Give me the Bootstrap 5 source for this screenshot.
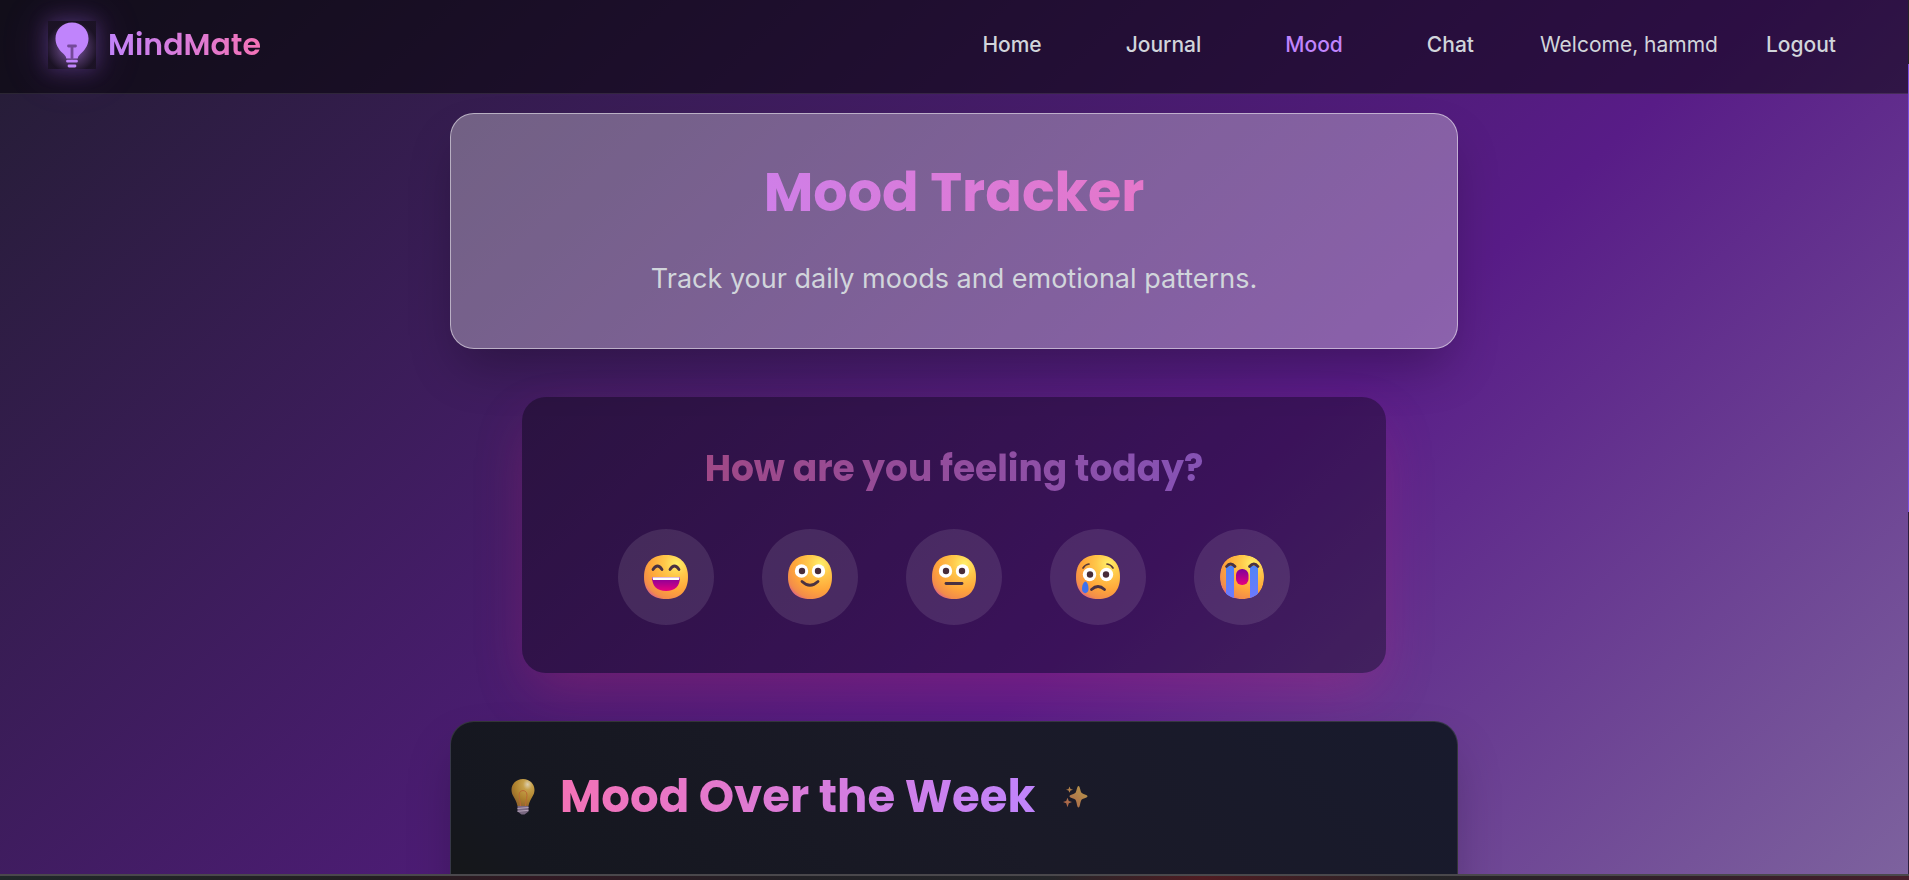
<!DOCTYPE html>
<html lang="en">
<head>
<meta charset="utf-8">
<meta name="viewport" content="width=device-width, initial-scale=1">
<title>MindMate – Mood Tracker</title>
<link rel="stylesheet" href="https://cdn.jsdelivr.net/npm/bootstrap@5.3.0/dist/css/bootstrap.min.css">
<style>
  body{font-family:"Inter","Liberation Sans",sans-serif;height:880px;overflow:hidden;color:#d1d5db;background:linear-gradient(#25232a 64px,#7a4fe0 64px,#7a4fe0 512px,#2b1f3d 512px)}
  .page{height:874px;width:1908px;background:linear-gradient(137deg,#241d34 0%,#581c87 62%,#7d629e 100%);overflow:hidden}
  .topbar{height:94px;background:rgba(0,0,0,.5);border-bottom:1px solid rgba(255,255,255,.1);padding:0 72px 4px 48px}
  .display-font{font-family:"Poppins","Inter",sans-serif}
  .brand-icon{width:48px;height:48px;background:radial-gradient(circle at 50% 55%,rgba(192,132,252,.5) 20%,rgba(110,75,140,.5) 45%,rgba(30,20,40,.75) 72%);box-shadow:0 0 20px rgba(168,105,247,.33),0 0 50px rgba(168,85,247,.2)}
  .clip-text{background-clip:text;-webkit-background-clip:text;color:transparent;white-space:nowrap}
  .brand-name{font-size:30px;font-weight:600;background-image:linear-gradient(90deg,#c084fc,#f472b6)}
  .menu{font-size:21px;font-weight:500;line-height:24px;white-space:nowrap}
  .menu .nav-link{padding:0;color:#d1d5db}
  .menu .nav-link.active{color:#c084fc}
  .nl-journal,.nl-mood,.nl-chat{margin-left:84px}
  .nl-welcome{margin-left:66px}
  .nl-logout{margin-left:48px}
  .hero{width:1008px;height:236px;margin-top:19px;border-radius:24px;background:rgba(255,255,255,.3);border:1px solid rgba(255,255,255,.5);box-shadow:0 25px 50px -10px rgba(0,0,0,.28);padding-top:46px}
  .hero h1{font-size:54px;font-weight:700;line-height:64px;margin:0 50px 35px;background-image:linear-gradient(90deg,#c084fc,#f472b6)}
  .hero p{font-size:27px;line-height:40px;margin:0}
  .feel{width:864px;height:276px;margin-top:48px;border-radius:24px;background:rgba(0,0,0,.33);padding-top:48px;box-shadow:0 22px 54px -8px rgba(219,39,119,.27)}
  .feel h2{font-size:36px;font-weight:700;line-height:48px;margin:0 0 36px;opacity:.57;background-image:linear-gradient(90deg,#f472b6,#c084fc)}
  .mood{width:96px;height:96px;border-radius:50%;border:0;padding:0;background:rgba(255,255,255,.1)}
  .week{width:1008px;height:400px;margin-top:48px;border-radius:24px;background:linear-gradient(45deg,#151719 17%,#15171f 24%,#1a1a27 60%,#181a2d 100%);border:1px solid rgba(255,255,255,.13);box-shadow:0 25px 50px -8px rgba(0,0,0,.25);padding:45px 60px}
  .week h2{font-size:45px;font-weight:700;line-height:60px;margin:0;background-image:linear-gradient(90deg,#f472b6,#c084fc)}
  .wk-bulb{margin:12px 25px 0 0}
  .wk-star{margin:19px 0 0 28px}
  .dock{height:6px;border-top:2px solid #4a484c;background:linear-gradient(90deg,#20282a 0,#231e21 20%,#321923 28%,#222126 42%,#25262a 55%,#501c22 63%,#262528 75%,#32202a 88%,#471f2c 100%)}
</style>
</head>
<body>
<svg width="0" height="0" class="position-absolute" aria-hidden="true">
  <defs>
    <radialGradient id="skin" cx=".74" cy=".2" r=".92"><stop offset="0" stop-color="#ffef69"/><stop offset=".3" stop-color="#ffc84a"/><stop offset=".65" stop-color="#ffa63a"/><stop offset=".9" stop-color="#f28b4b"/><stop offset="1" stop-color="#dd6387"/></radialGradient>
    <linearGradient id="mouth" x1="0" y1="0" x2="0" y2="1"><stop offset="0" stop-color="#7d009b"/><stop offset="1" stop-color="#e7007f"/></linearGradient>
    <linearGradient id="tear" x1="0" y1="0" x2="0" y2="1"><stop offset="0" stop-color="#4f84f6"/><stop offset="1" stop-color="#6e79ff"/></linearGradient>
    <linearGradient id="star" x1="1" y1="0" x2="0" y2="1"><stop offset="0" stop-color="#b89b4b"/><stop offset="1" stop-color="#a85c49"/></linearGradient>
    <radialGradient id="glass" cx=".7" cy=".2" r=".8"><stop offset="0" stop-color="#ddcfae"/><stop offset=".25" stop-color="#c6a04a"/><stop offset=".7" stop-color="#ae812d"/><stop offset="1" stop-color="#94682d"/></radialGradient>
    <path id="face" d="M22 0C35 0 44 7 44 22S35 44 22 44 0 37 0 22 9 0 22 0Z"/>
    <clipPath id="face-clip"><use href="#face"/></clipPath>
  </defs>
</svg>
<div class="page d-flex flex-column">
  <nav class="topbar d-flex align-items-center justify-content-between flex-shrink-0">
    <a href="#" class="d-flex align-items-center text-decoration-none">
      <span class="brand-icon d-block"><svg class="d-block" width="48" height="48" viewBox="0 0 48 48"><path fill="#c084fc" d="M24 1.500C14.600 1.500 7.500 8.600 7.500 17.500c0 6 3 10.500 6.500 14 2.500 2.300 4 3.500 4.300 6h11.400c.3-2.500 2-3.700 4.300-6 3.600-3.500 6.500-8 6.500-14C40.500 8.600 33.400 1.500 24 1.500Z"/><path d="M20.500 25h7M24 25v12" stroke="#754a9a" stroke-width="2.800" stroke-linecap="round"/><path d="M19.500 40.200h9M21 45h6" stroke="#c084fc" stroke-width="2.800" stroke-linecap="round"/></svg></span>
      <span class="brand-name display-font clip-text ms-2 ps-1">MindMate</span>
    </a>
    <div class="menu nav flex-nowrap align-items-center">
      <a class="nav-link" href="#">Home</a>
      <a class="nav-link nl-journal" href="#">Journal</a>
      <a class="nav-link active nl-mood" href="#">Mood</a>
      <a class="nav-link nl-chat" href="#">Chat</a>
      <span class="fw-normal nl-welcome">Welcome, hammd</span>
      <a class="nav-link nl-logout" href="#">Logout</a>
    </div>
  </nav>
  <main class="d-flex flex-column align-items-center flex-shrink-0">
    <section class="hero text-center flex-shrink-0">
      <h1 class="display-font clip-text">Mood Tracker</h1>
      <p>Track your daily moods and emotional patterns.</p>
    </section>
    <section class="feel d-flex flex-column align-items-center flex-shrink-0">
      <h2 class="display-font clip-text">How are you feeling today?</h2>
      <div class="d-flex gap-5">
        <button class="mood d-flex align-items-center justify-content-center" aria-label="Great"><svg width="44" height="44" viewBox="0 0 44 44"><use href="#face" fill="url(#skin)"/><path d="M9 14.500q4.500-7 9 0M26 14.500q4.500-7 9 0" fill="none" stroke="#493242" stroke-width="2.800" stroke-linecap="round"/><path d="M8 22H36C36 31 31 36 22 36S8 31 8 22Z" fill="url(#mouth)"/><path d="M8.300 22.200H35.800L35 25H9Z" fill="#fff"/></svg></button>
        <button class="mood d-flex align-items-center justify-content-center" aria-label="Good"><svg width="44" height="44" viewBox="0 0 44 44"><use href="#face" fill="url(#skin)"/><circle cx="13.500" cy="16" r="6.700" fill="#fff"/><circle cx="30.500" cy="16" r="6.700" fill="#fff"/><circle cx="14" cy="16" r="3.200" fill="#482c38"/><circle cx="30" cy="16" r="3.200" fill="#482c38"/><path d="M14 26.500q8 7.500 16 0" fill="none" stroke="#493242" stroke-width="2.800" stroke-linecap="round"/></svg></button>
        <button class="mood d-flex align-items-center justify-content-center" aria-label="Okay"><svg width="44" height="44" viewBox="0 0 44 44"><use href="#face" fill="url(#skin)"/><circle cx="13.500" cy="16" r="6.700" fill="#fff"/><circle cx="30.500" cy="16" r="6.700" fill="#fff"/><circle cx="14" cy="16" r="3.200" fill="#482c38"/><circle cx="30" cy="16" r="3.200" fill="#482c38"/><path d="M14 28.500h16" stroke="#493242" stroke-width="2.800" stroke-linecap="round"/></svg></button>
        <button class="mood d-flex align-items-center justify-content-center" aria-label="Sad"><svg width="44" height="44" viewBox="0 0 44 44"><use href="#face" fill="url(#skin)"/><circle cx="13.500" cy="19.500" r="6.700" fill="#fff"/><circle cx="30.500" cy="19.500" r="6.700" fill="#fff"/><circle cx="14" cy="19.500" r="3.200" fill="#482c38"/><circle cx="30" cy="19.500" r="3.200" fill="#482c38"/><path d="M7 13q2-3.500 6-4M31 9q4 .5 6 4" fill="none" stroke="#5a3a38" stroke-width="1.700" stroke-linecap="round"/><path d="M15.500 34.500q6.500-6 13 0" fill="none" stroke="#493242" stroke-width="2.800" stroke-linecap="round"/><path d="M9.500 26.500c2 .5 3 4 3 7.500 0 5.500-6.500 5.500-6.500 0 0-3.500 1.200-7 3.500-7.500Z" fill="#3f72ee"/></svg></button>
        <button class="mood d-flex align-items-center justify-content-center" aria-label="Awful"><svg width="44" height="44" viewBox="0 0 44 44"><g clip-path="url(#face-clip)"><use href="#face" fill="url(#skin)"/><path d="M6 11h8v33H6ZM30 11h8v33h-8Z" fill="url(#tear)"/></g><path d="M6.500 11.500q4-5 8.500 0M29.500 11.500q4.500-5 8.500 0" fill="none" stroke="#493242" stroke-width="2.800" stroke-linecap="round"/><rect x="16" y="14" width="12.500" height="16" rx="6" fill="url(#mouth)"/></svg></button>
      </div>
    </section>
    <section class="week d-flex align-items-start flex-shrink-0">
      <svg width="24" height="36" viewBox="0 0 24 36" class="wk-bulb flex-shrink-0"><path d="M12 0C5 0 .5 5 .5 11c0 6 4.500 8 6 16h11c1.500-8 6-10 6-16C23.500 5 19 0 12 0Z" fill="url(#glass)"/><path d="M9.500 27C9.500 21 7 17 8.500 13.500q3.500-4 7 0C17 17 14.500 21 14.500 27" fill="none" stroke="#ba6934"/><path d="M6.500 27h11v5.500l-4 3h-3l-4-3Z" fill="#786780"/><path d="M6.500 29.500l11-1M6.500 32.300l11-1" stroke="#b5a2ba"/></svg>
      <h2 class="display-font clip-text">Mood Over the Week</h2>
      <svg width="25" height="22" viewBox="0 0 25 28" preserveAspectRatio="none" class="wk-star flex-shrink-0"><path fill="url(#star)" d="M15.500 0c1.500 0 1.700 6.500 3 8.500 1.500 2 6 2.500 6 4.500s-4.500 2.500-6 4.500c-1.300 2.500-1.500 10-3 10s-1.700-7.500-3-10c-1.500-2-6-2.500-6-4.500s4.500-2.500 6-4.500c1.300-2 1.500-8.500 3-8.500ZM6.500.5l1 3.200 2.500 1-2.500 1-1 3-1-3-2.500-1 2.500-1ZM4.500 15l1.300 4L9 20.500 5.800 22l-1.300 5-1.300-5L0 20.500 3.200 19Z"/></svg>
    </section>
  </main>
</div>
<div class="dock"></div>
<script src="https://cdn.jsdelivr.net/npm/bootstrap@5.3.0/dist/js/bootstrap.bundle.min.js"></script>
</body>
</html>
